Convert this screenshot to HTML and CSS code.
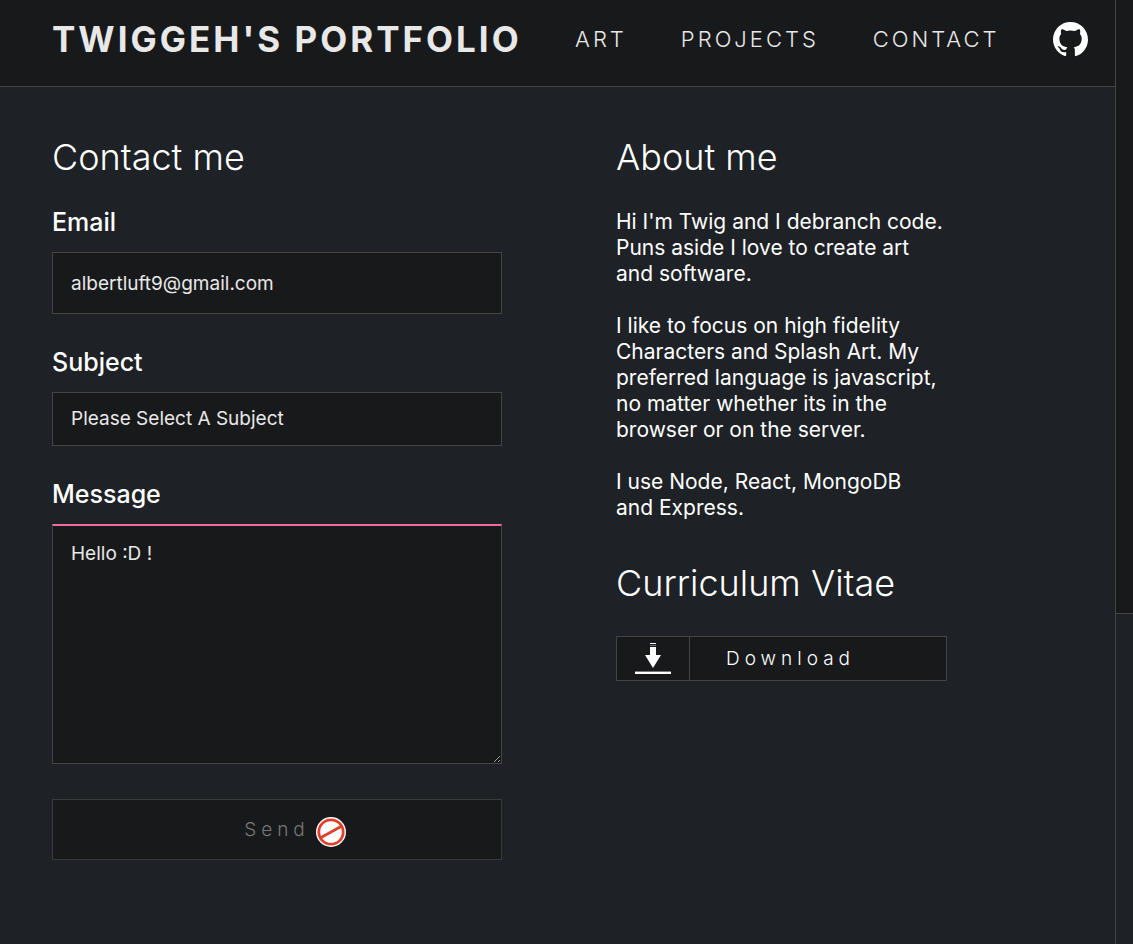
FILE: index.html
```html
<!DOCTYPE html>
<html lang="en">
<head>
<meta charset="utf-8">
<meta name="viewport" content="width=device-width, initial-scale=1">
<title>Twiggeh's Portfolio</title>
<link rel="stylesheet" href="styles.css">
</head>
<body>
<div class="page">
  <header class="header">
    <a class="brand" href="#">TWIGGEH'S PORTFOLIO</a>
    <nav class="nav">
      <a class="nav-link" href="#">ART</a>
      <a class="nav-link" href="#">PROJECTS</a>
      <a class="nav-link" href="#">CONTACT</a>
    </nav>
    <a class="github" href="#" aria-label="GitHub">
      <svg class="github-icon" viewBox="0 0 16 16" fill="currentColor" aria-hidden="true"><path d="M8 0C3.58 0 0 3.58 0 8c0 3.54 2.29 6.53 5.47 7.59.4.07.55-.17.55-.38 0-.19-.01-.82-.01-1.49-2.01.37-2.53-.49-2.69-.94-.09-.23-.48-.94-.82-1.13-.28-.15-.68-.52-.01-.53.63-.01 1.08.58 1.23.82.72 1.21 1.87.87 2.33.66.07-.52.28-.87.51-1.07-1.78-.2-3.64-.89-3.64-3.95 0-.87.31-1.59.82-2.15-.08-.2-.36-1.02.08-2.12 0 0 .67-.21 2.2.82.64-.18 1.32-.27 2-.27s1.36.09 2 .27c1.53-1.04 2.2-.82 2.2-.82.44 1.1.16 1.92.08 2.12.51.56.82 1.27.82 2.15 0 3.07-1.87 3.75-3.65 3.95.29.25.54.73.54 1.48 0 1.07-.01 1.93-.01 2.200 0 .21.15.46.55.38A8.01 8.01 0 0 0 16 8c0-4.420-3.580-8-8-8z"/></svg>
    </a>
  </header>
  <main class="content">
    <section>
      <h2 class="heading">Contact me</h2>
      <form class="form">
        <div class="field">
          <label class="label" for="email">Email</label>
          <input class="control email" id="email" type="email" value="albertluft9@gmail.com">
        </div>
        <div class="field">
          <label class="label" for="subject">Subject</label>
          <select class="control subject" id="subject"><option>Please Select A Subject</option></select>
        </div>
        <div class="field">
          <label class="label" for="message">Message</label>
          <textarea class="control message" id="message">Hello :D !</textarea>
        </div>
        <button class="send" type="button">Send
          <svg class="forbidden" viewBox="0 0 30 30" aria-hidden="true"><circle cx="15" cy="15" r="15" fill="#fff"/><circle cx="15" cy="15" r="12.2" fill="#fff" stroke="#e0402a" stroke-width="2.8"/><path d="M5 20.5 25 9.5" stroke="#e0402a" stroke-width="2.8"/></svg>
        </button>
      </form>
    </section>
    <section>
      <h2 class="heading">About me</h2>
      <div class="about">
        <p>Hi I'm Twig and I debranch code.<br>Puns aside I love to create art<br>and software.</p>
        <p>I like to focus on high fidelity<br>Characters and Splash Art. My<br>preferred language is javascript,<br>no matter whether its in the<br>browser or on the server.</p>
        <p>I use Node, React, MongoDB<br>and Express.</p>
      </div>
      <h2 class="heading">Curriculum Vitae</h2>
      <button class="download" type="button">
        <span class="download-icon"><svg viewBox="0 0 36 32" width="36" height="32" fill="#fff" aria-hidden="true"><path d="M15 0h6v1h-6zM15 4h6v8h5L18 25 10 12h5zM0 29h36v2H0z"/><path d="M15 2h6v1h-6zM0 28h36v1H0z" fill="#777"/></svg></span>
        <span class="download-text">Download</span>
      </button>
    </section>
  </main>
</div>
<div class="track"><div class="thumb"></div></div>
</body>
</html>
```
FILE: styles.css
```css
* { box-sizing: border-box; }
body {
  margin: 0;
  min-height: 100vh;
  display: flex;
  background: #1e2125;
  color: #fff;
  font-family: Inter, "Open Sans", sans-serif;
}
.page { flex: 1; min-width: 0; }
.header {
  display: flex;
  align-items: center;
  justify-content: space-between;
  padding: 17px 27px 25px 52px;
  background: #18191a;
  border-bottom: 1px solid #444;
}
.brand, .nav-link {
  color: #e8e8e8;
  text-decoration: none;
  white-space: nowrap;
  line-height: 44px;
}
.brand { font-size: 35px; font-weight: 700; letter-spacing: 3px; }
.nav { display: flex; gap: 54px; }
.nav-link { font-size: 22px; font-weight: 300; letter-spacing: 3px; }
.github { display: flex; color: #fff; }
.github-icon { width: 35px; height: 35px; }
.content {
  display: grid;
  grid-template-columns: 450fr 331fr;
  gap: 114px;
  padding: 48px 168px 48px 52px;
}
.heading { margin: 0; font-size: 36px; font-weight: 300; line-height: 44px; }
.form { display: flex; flex-direction: column; gap: 32px; padding-top: 27px; }
.field { display: flex; flex-direction: column; gap: 14px; }
.label { font-size: 25px; font-weight: 500; line-height: 32px; }
.control {
  width: 100%;
  margin: 0;
  padding: 0 18px;
  border: 1px solid #444;
  border-radius: 0;
  outline: 0;
  appearance: none;
  background: #18191a;
  color: #e8e8e8;
  font: 400 19px/24px Inter, "Open Sans", sans-serif;
}
.email { height: 62px; }
.subject { height: 54px; }
.message { height: 240px; padding-top: 16px; border-top: 2px solid #f06aa6; resize: vertical; }
.send {
  position: relative;
  height: 61px;
  margin-top: 3px;
  padding: 0;
  border: 1px solid #3a3b3c;
  background: #18191a;
  color: #777;
  font: 300 19px/24px Inter, "Open Sans", sans-serif;
  letter-spacing: 5px;
}
.forbidden { position: absolute; left: calc(50% + 39px); top: 17px; width: 30px; height: 30px; }
.about { padding: 30px 0 40px; font-size: 21px; line-height: 26px; white-space: nowrap; }
.about p { margin: 0 0 26px; }
.about p:last-child { margin: 0; }
.download {
  display: flex;
  width: 100%;
  height: 45px;
  margin-top: 31px;
  padding: 0;
  border: 1px solid #444;
  background: #18191a;
  color: #fff;
  font: 300 19px/43px Inter, "Open Sans", sans-serif;
  letter-spacing: 5px;
}
.download-icon { display: flex; align-items: center; padding: 0 18px; height: 43px; border-right: 1px solid #444; }
.download-text { padding-left: 36px; }
.track { width: 18px; border-left: 1px solid #444; background: #1e2125; }
.thumb { height: 65vh; background: #18191a; border-bottom: 1px solid #444; }
```
